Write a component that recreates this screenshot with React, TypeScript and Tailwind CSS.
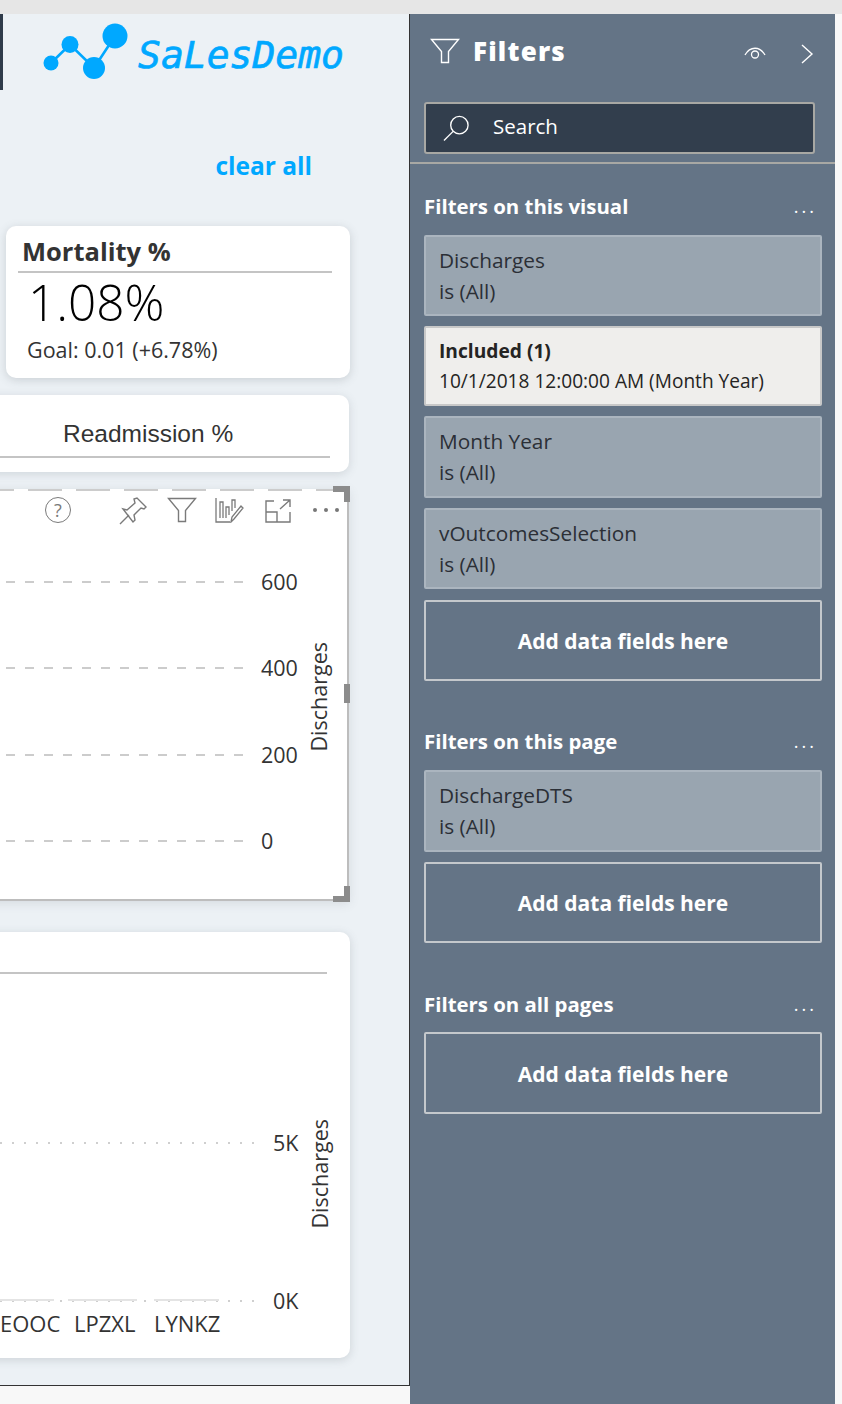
import React from "react";

const ui = { fontFamily: '"Open Sans","Noto Sans",sans-serif' };

function Funnel({ className }: { className?: string }) {
  return (
    <svg viewBox="0 0 30 26" fill="none" stroke="currentColor" strokeWidth="1.4" className={className}>
      <path d="M1.5 1.5h27L18.5 13.5V24.5h-7V13.5z" />
    </svg>
  );
}

function VisualHeader() {
  return (
    <div className="relative h-[50px] text-[#7a7a7a]">
      {/* help */}
      <div className="absolute left-[66px] top-[8px] flex h-[26px] w-[26px] items-center justify-center rounded-full border-[1.5px] border-[#7a7a7a] text-[18px] leading-none">?</div>
      {/* pin */}
      <svg viewBox="0 0 28 28" fill="none" stroke="currentColor" strokeWidth="1.4" className="absolute left-[140px] top-[8px] h-[28px] w-[28px]">
        <path d="M1 27l9-9M4 12l4 1 8-7-1-4 3-1 9 9-2 2-3-1-7 7 1 5-2 2z" />
      </svg>
      <Funnel className="absolute left-[188px] top-[8px] h-[26px] w-[30px]" />
      {/* build visual */}
      <svg viewBox="0 0 30 26" fill="none" stroke="currentColor" strokeWidth="1.3" className="absolute left-[236px] top-[8px] h-[26px] w-[30px]">
        <path d="M1 1v24h14M5 21V5h3v16M11 21V10h3v8M17 14V3h3v8M16 25l1-5L26 9l2 2-9 11z" />
      </svg>
      {/* focus mode */}
      <svg viewBox="0 0 26 24" fill="none" stroke="currentColor" strokeWidth="1.4" className="absolute left-[286px] top-[10px] h-[24px] w-[26px]">
        <path d="M9 2H1v21h24V13M1 13h11v10M15 10L25 1M18 1h7v7" />
      </svg>
      <div className="absolute left-[334px] top-[19px] flex gap-[7px]">
        <span className="h-[4px] w-[4px] rounded-full bg-[#777]" />
        <span className="h-[4px] w-[4px] rounded-full bg-[#777]" />
        <span className="h-[4px] w-[4px] rounded-full bg-[#777]" />
      </div>
    </div>
  );
}

function DashRow({ label }: { label: string }) {
  return (
    <div className="flex h-[86.3px] items-center">
      <div className="h-[2px] flex-1 bg-[repeating-linear-gradient(to_left,#cccccc_0,#cccccc_9px,transparent_9px,transparent_19px)]" />
      <span className="ml-[18px] w-[38px] text-[21.5px] text-[#333]">{label}</span>
    </div>
  );
}

function DottedRow({ label, bars }: { label: string; bars?: boolean }) {
  return (
    <div className="flex h-[24px] items-center">
      <div className="relative h-[2px] flex-1 bg-[repeating-linear-gradient(to_right,#cfcfcf_0,#cfcfcf_2px,transparent_2px,transparent_12px)]">
        {bars && (
          <>
            <div className="absolute left-0 top-[-1px] h-[2px] w-[54px] bg-[#e4e4e4]" />
            <div className="absolute left-[68px] top-[-1px] h-[2px] w-[69px] bg-[#e4e4e4]" />
            <div className="absolute left-[154px] top-[-1px] h-[2px] w-[65px] bg-[#e4e4e4]" />
          </>
        )}
      </div>
      <span className="ml-[18px] w-[25px] text-right text-[21.5px] text-[#333]">{label}</span>
    </div>
  );
}

function AxisTitle({ className }: { className: string }) {
  return <span className={`absolute rotate-180 text-[21.5px] leading-none text-[#333] [writing-mode:vertical-rl] ${className}`}>Discharges</span>;
}

function SectionTitle({ title, className }: { title: string; className: string }) {
  return (
    <div className={`flex items-center justify-between pr-[5px] ${className}`}>
      <span className="text-[20.4px] font-bold leading-[28px] text-white">{title}</span>
      <span className="text-[18px] leading-none tracking-[3px] text-white">...</span>
    </div>
  );
}

function FilterCard({ name, value, tall }: { name: string; value: string; tall?: boolean }) {
  return (
    <div className={`flex flex-col justify-center rounded-[2px] border-2 border-[#abb5bf] bg-[#99a5b0] px-[13px] text-[20.8px] leading-[31px] text-[#2b2f36] ${tall ? "h-[82px]" : "h-[81px]"}`}>
      <span>{name}</span>
      <span>{value}</span>
    </div>
  );
}

function IncludedCard({ name, value }: { name: string; value: string }) {
  return (
    <div className="flex h-[80px] flex-col justify-center rounded-[2px] border-2 border-[#c8c8c8] bg-[#efeeec] px-[13px] text-[#252423]">
      <span className="text-[19.2px] font-bold leading-[31px]">{name}</span>
      <span className="text-[19.1px] leading-[31px]">{value}</span>
    </div>
  );
}

function AddFields({ tall }: { tall?: boolean }) {
  return (
    <div className={`flex items-center justify-center rounded-[2px] border-2 border-[#c4c8cc] pt-[3px] text-[21px] font-bold text-white ${tall ? "h-[82px]" : "h-[81px]"}`}>
      Add data fields here
    </div>
  );
}

export default function App() {
  return (
    <div className="h-[1404px] w-[842px] overflow-hidden bg-[#f8f8f8]" style={ui}>
      <div className="h-[14px] bg-[#e6e6e6]" />
      <div className="flex">
        <div className="w-[410px]">
          <div className="relative h-[1372px] overflow-hidden border-r border-b border-[#333] bg-[#ecf1f5]">
            {/* logo */}
            <div className="relative flex h-[76px] items-start">
              <div className="h-[76px] w-[3px] bg-[#2f3b4a]" />
              <svg viewBox="0 0 90 60" className="ml-[40px] mt-[9px] h-[60px] w-[90px]">
                <path d="M8 40L27 21.500 51 45 72 13" fill="none" stroke="#00a8ff" strokeWidth="2.600" />
                <circle cx="8" cy="40" r="7.500" fill="#00a8ff" />
                <circle cx="27" cy="21.500" r="8.500" fill="#00a8ff" />
                <circle cx="51" cy="45" r="11" fill="#00a8ff" />
                <circle cx="72" cy="13" r="12.500" fill="#00a8ff" />
              </svg>
              <span className="ml-[5px] mt-[17px] text-[38px] italic leading-[48px] text-[#00a8ff] [-webkit-text-stroke:0.7px_#00a8ff]" style={{ fontFamily: '"DejaVu Sans Mono",monospace' }}>SaLesDemo</span>
            </div>
            <div className="mt-[58px] pr-[97px] text-right text-[24.5px] font-bold leading-[36px] text-[#00a8ff]">clear all</div>
            {/* Mortality card */}
            <div className="ml-[6px] mt-[42px] h-[152px] w-[344px] rounded-[10px] bg-white pt-[8px] shadow-[0_2px_10px_rgba(80,90,100,0.22)]">
              <div className="ml-[12px] mr-[18px] border-b-2 border-[#c4c4c4] pb-[3px] pl-[4px] text-[25.5px] font-bold leading-[34px] text-[#333]">Mortality %</div>
              <div className="ml-[22px] text-[49.5px] font-light leading-[58px] text-black">1.08%</div>
              <div className="ml-[21px] mt-[5px] text-[21.5px] leading-[28px] text-[#333]">Goal: 0.01 (+6.78%)</div>
            </div>
            {/* Readmission card */}
            <div className="ml-[-20px] mt-[17px] h-[77px] w-[369px] rounded-[10px] bg-white pt-[23px] shadow-[0_2px_10px_rgba(80,90,100,0.18)]">
              <div className="mr-[19px] border-b-2 border-[#c4c4c4] pb-[6px] pl-[83px] text-[24.5px] leading-[32px] text-[#333]" style={{ fontFamily: '"Liberation Sans",sans-serif' }}>Readmission %</div>
            </div>
            {/* Discharges chart, in focus */}
            <div className="relative ml-[-20px] mt-[17px] h-[412px] w-[369px] border-r-2 border-b-2 border-[#bdbdbd] bg-white shadow-[0_2px_10px_rgba(80,90,100,0.15)]">
              <div className="absolute inset-x-0 top-0 h-[2px] bg-[repeating-linear-gradient(to_right,#cccccc_0,#cccccc_34px,transparent_34px,transparent_48px)]" />
              <div className="ml-[-1px]">
                <VisualHeader />
              </div>
              <div className="w-[319px] pl-[20px]">
                <DashRow label="600" />
                <DashRow label="400" />
                <DashRow label="200" />
                <DashRow label="0" />
              </div>
              <AxisTitle className="right-[18px] top-[153px]" />
              <div className="absolute right-[-3px] top-[-3px] h-[16px] w-[17px] border-t-[6px] border-r-[6px] border-[#8c8c8c]" />
              <div className="absolute right-[-3px] top-[195px] h-[19px] w-[6px] bg-[#8c8c8c]" />
              <div className="absolute bottom-[-3px] right-[-3px] h-[16px] w-[17px] border-b-[6px] border-r-[6px] border-[#8c8c8c]" />
            </div>
            {/* Discharges by unit chart */}
            <div className="relative ml-[-20px] mt-[31px] h-[426px] w-[370px] rounded-[10px] bg-white shadow-[0_2px_10px_rgba(80,90,100,0.2)]">
              <div className="h-[42px] w-[347px] border-b-2 border-[#c4c4c4]" />
              <div className="w-[318px] pl-[20px]">
                <div className="pt-[157px]">
                  <DottedRow label="5K" />
                </div>
                <div className="pt-[134px]">
                  <DottedRow label="0K" bars />
                </div>
              </div>
              <div className="ml-[20px] mt-[-5px] flex h-[30px] text-[22px] leading-[30px] text-[#333]">
                <span className="w-[57px] text-right">EOOC</span>
                <span className="ml-[17px] w-[80px]">LPZXL</span>
                <span>LYNKZ</span>
              </div>
              <AxisTitle className="right-[20px] top-[187px]" />
            </div>
          </div>
        </div>

        {/* filter pane */}
        <div className="h-[1390px] w-[425px] bg-[#647486] text-white">
          <div className="flex h-[76px] items-center pl-[20px] pr-[21px]">
            <Funnel className="mb-[2px] h-[26px] w-[30px]" />
            <span className="mb-[2px] ml-[13px] text-[26px] font-extrabold leading-none tracking-[1.2px]">Filters</span>
            <svg viewBox="0 0 22 14" fill="none" stroke="currentColor" strokeWidth="1.300" className="ml-auto mt-[2px] h-[14px] w-[22px]">
              <path d="M1 9c5-9 15-9 20 0" />
              <circle cx="11" cy="8.500" r="3.500" />
            </svg>
            <svg viewBox="0 0 14 20" fill="none" stroke="currentColor" strokeWidth="1.400" className="ml-[34px] mt-[4px] h-[20px] w-[14px]">
              <path d="M2 1l10 9-10 9" />
            </svg>
          </div>
          <div className="ml-[14px] mt-[12px] flex h-[52px] w-[391px] items-center rounded-[3px] border-2 border-[#a8a8a4] bg-[#323e4d] pl-[17px]">
            <svg viewBox="0 0 28 28" fill="none" stroke="currentColor" strokeWidth="1.400" className="h-[27px] w-[27px]">
              <circle cx="17" cy="10.500" r="9" />
              <path d="M10.500 17L1 26.500" />
            </svg>
            <span className="mb-[3px] ml-[23px] text-[20.500px] leading-none">Search</span>
          </div>
          <div className="mt-[8px] h-[2px] bg-[#a8a8a4]" />
          <div className="pl-[14px] pr-[13px]">
            <SectionTitle title="Filters on this visual" className="mt-[28px]" />
            <div className="mt-[15px] flex flex-col gap-[10px]">
              <FilterCard name="Discharges" value="is (All)" />
              <IncludedCard name="Included (1)" value="10/1/2018 12:00:00 AM (Month Year)" />
              <FilterCard name="Month Year" value="is (All)" tall />
              <FilterCard name="vOutcomesSelection" value="is (All)" />
              <div className="mt-[1px]">
                <AddFields />
              </div>
            </div>
            <SectionTitle title="Filters on this page" className="mt-[46px]" />
            <div className="mt-[15px] flex flex-col gap-[10px]">
              <FilterCard name="DischargeDTS" value="is (All)" tall />
              <AddFields />
            </div>
            <SectionTitle title="Filters on all pages" className="mt-[47px]" />
            <div className="mt-[14px]">
              <AddFields tall />
            </div>
          </div>
        </div>
      </div>
    </div>
  );
}
